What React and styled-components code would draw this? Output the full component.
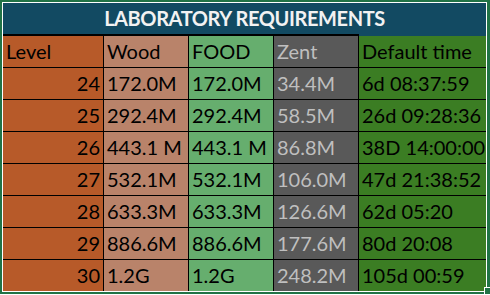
import React from 'react';
import styled, { createGlobalStyle } from 'styled-components';

const GlobalStyle = createGlobalStyle`
  html, body {
    margin: 0;
    padding: 0;
    background: #ffffff;
  }
  body {
    font-family: Lato, "Liberation Sans", sans-serif;
  }
`;

const palette = {
  level: { bg: '#b75a29', fg: '#000000' },
  wood: { bg: '#b9836a', fg: '#000000' },
  food: { bg: '#66ae6e', fg: '#000000' },
  zent: { bg: '#595959', fg: '#bfbfbf' },
  time: { bg: '#3b7d23', fg: '#000000' },
};

const Frame = styled.div`
  position: relative;
  width: 490px;
  box-sizing: border-box;
  border: 2px solid #217346;
  border-right-width: 3px;
  padding: 1px;
  background: #ffffff;
`;

const TitleBar = styled.div`
  height: 31px;
  line-height: 31px;
  background: #124a62;
  color: #f2f2f2;
  font-size: 20px;
  font-weight: 700;
  text-align: center;
  letter-spacing: -0.4px;
`;

const Grid = styled.div`
  display: grid;
  grid-template-columns: 101px 85px 85px 85px 1fr;
`;

const Cell = styled.div`
  box-sizing: border-box;
  height: ${p => (p.$head ? 34 : p.$lastRow ? 31 : 32)}px;
  line-height: 31px;
  padding: 0 3px 0 3px;
  font-size: 20px;
  white-space: nowrap;
  overflow: hidden;
  background: ${p => palette[p.$kind].bg};
  color: ${p => palette[p.$kind].fg};
  text-align: ${p => (p.$right ? 'right' : 'left')};
  border-right: ${p => (p.$kind === 'time' ? 'none' : '1px solid #000')};
  border-bottom: ${p => (p.$lastRow ? 'none' : '1px solid #000')};
  border-top: ${p =>
    p.$head ? `2px solid ${p.$kind === 'time' ? '#124a62' : '#000'}` : 'none'};
`;

const Handle = styled.div`
  position: absolute;
  right: -3px;
  bottom: -2px;
  width: 5px;
  height: 6px;
  background: #217346;
  border-left: 1px solid #ffffff;
  border-top: 1px solid #ffffff;
`;

const columns = [
  { key: 'level', label: 'Level' },
  { key: 'wood', label: 'Wood' },
  { key: 'food', label: 'FOOD' },
  { key: 'zent', label: 'Zent' },
  { key: 'time', label: 'Default time' },
];

const rows = [
  { level: '24', wood: '172.0M', food: '172.0M', zent: '34.4M', time: '6d 08:37:59' },
  { level: '25', wood: '292.4M', food: '292.4M', zent: '58.5M', time: '26d 09:28:36' },
  { level: '26', wood: '443.1 M', food: '443.1 M', zent: '86.8M', time: '38D 14:00:00' },
  { level: '27', wood: '532.1M', food: '532.1M', zent: '106.0M', time: '47d 21:38:52' },
  { level: '28', wood: '633.3M', food: '633.3M', zent: '126.6M', time: '62d 05:20' },
  { level: '29', wood: '886.6M', food: '886.6M', zent: '177.6M', time: '80d 20:08' },
  { level: '30', wood: '1.2G', food: '1.2G', zent: '248.2M', time: '105d 00:59' },
];

export default function App() {
  return (
    <>
      <GlobalStyle />
      <Frame>
        <TitleBar>LABORATORY REQUIREMENTS</TitleBar>
        <Grid>
          {columns.map(col => (
            <Cell key={col.key} $kind={col.key} $head>
              {col.label}
            </Cell>
          ))}
          {rows.map((row, i) =>
            columns.map(col => (
              <Cell
                key={row.level + col.key}
                $kind={col.key}
                $right={col.key === 'level'}
                $lastRow={i === rows.length - 1}
              >
                {row[col.key]}
              </Cell>
            ))
          )}
        </Grid>
        <Handle />
      </Frame>
    </>
  );
}
